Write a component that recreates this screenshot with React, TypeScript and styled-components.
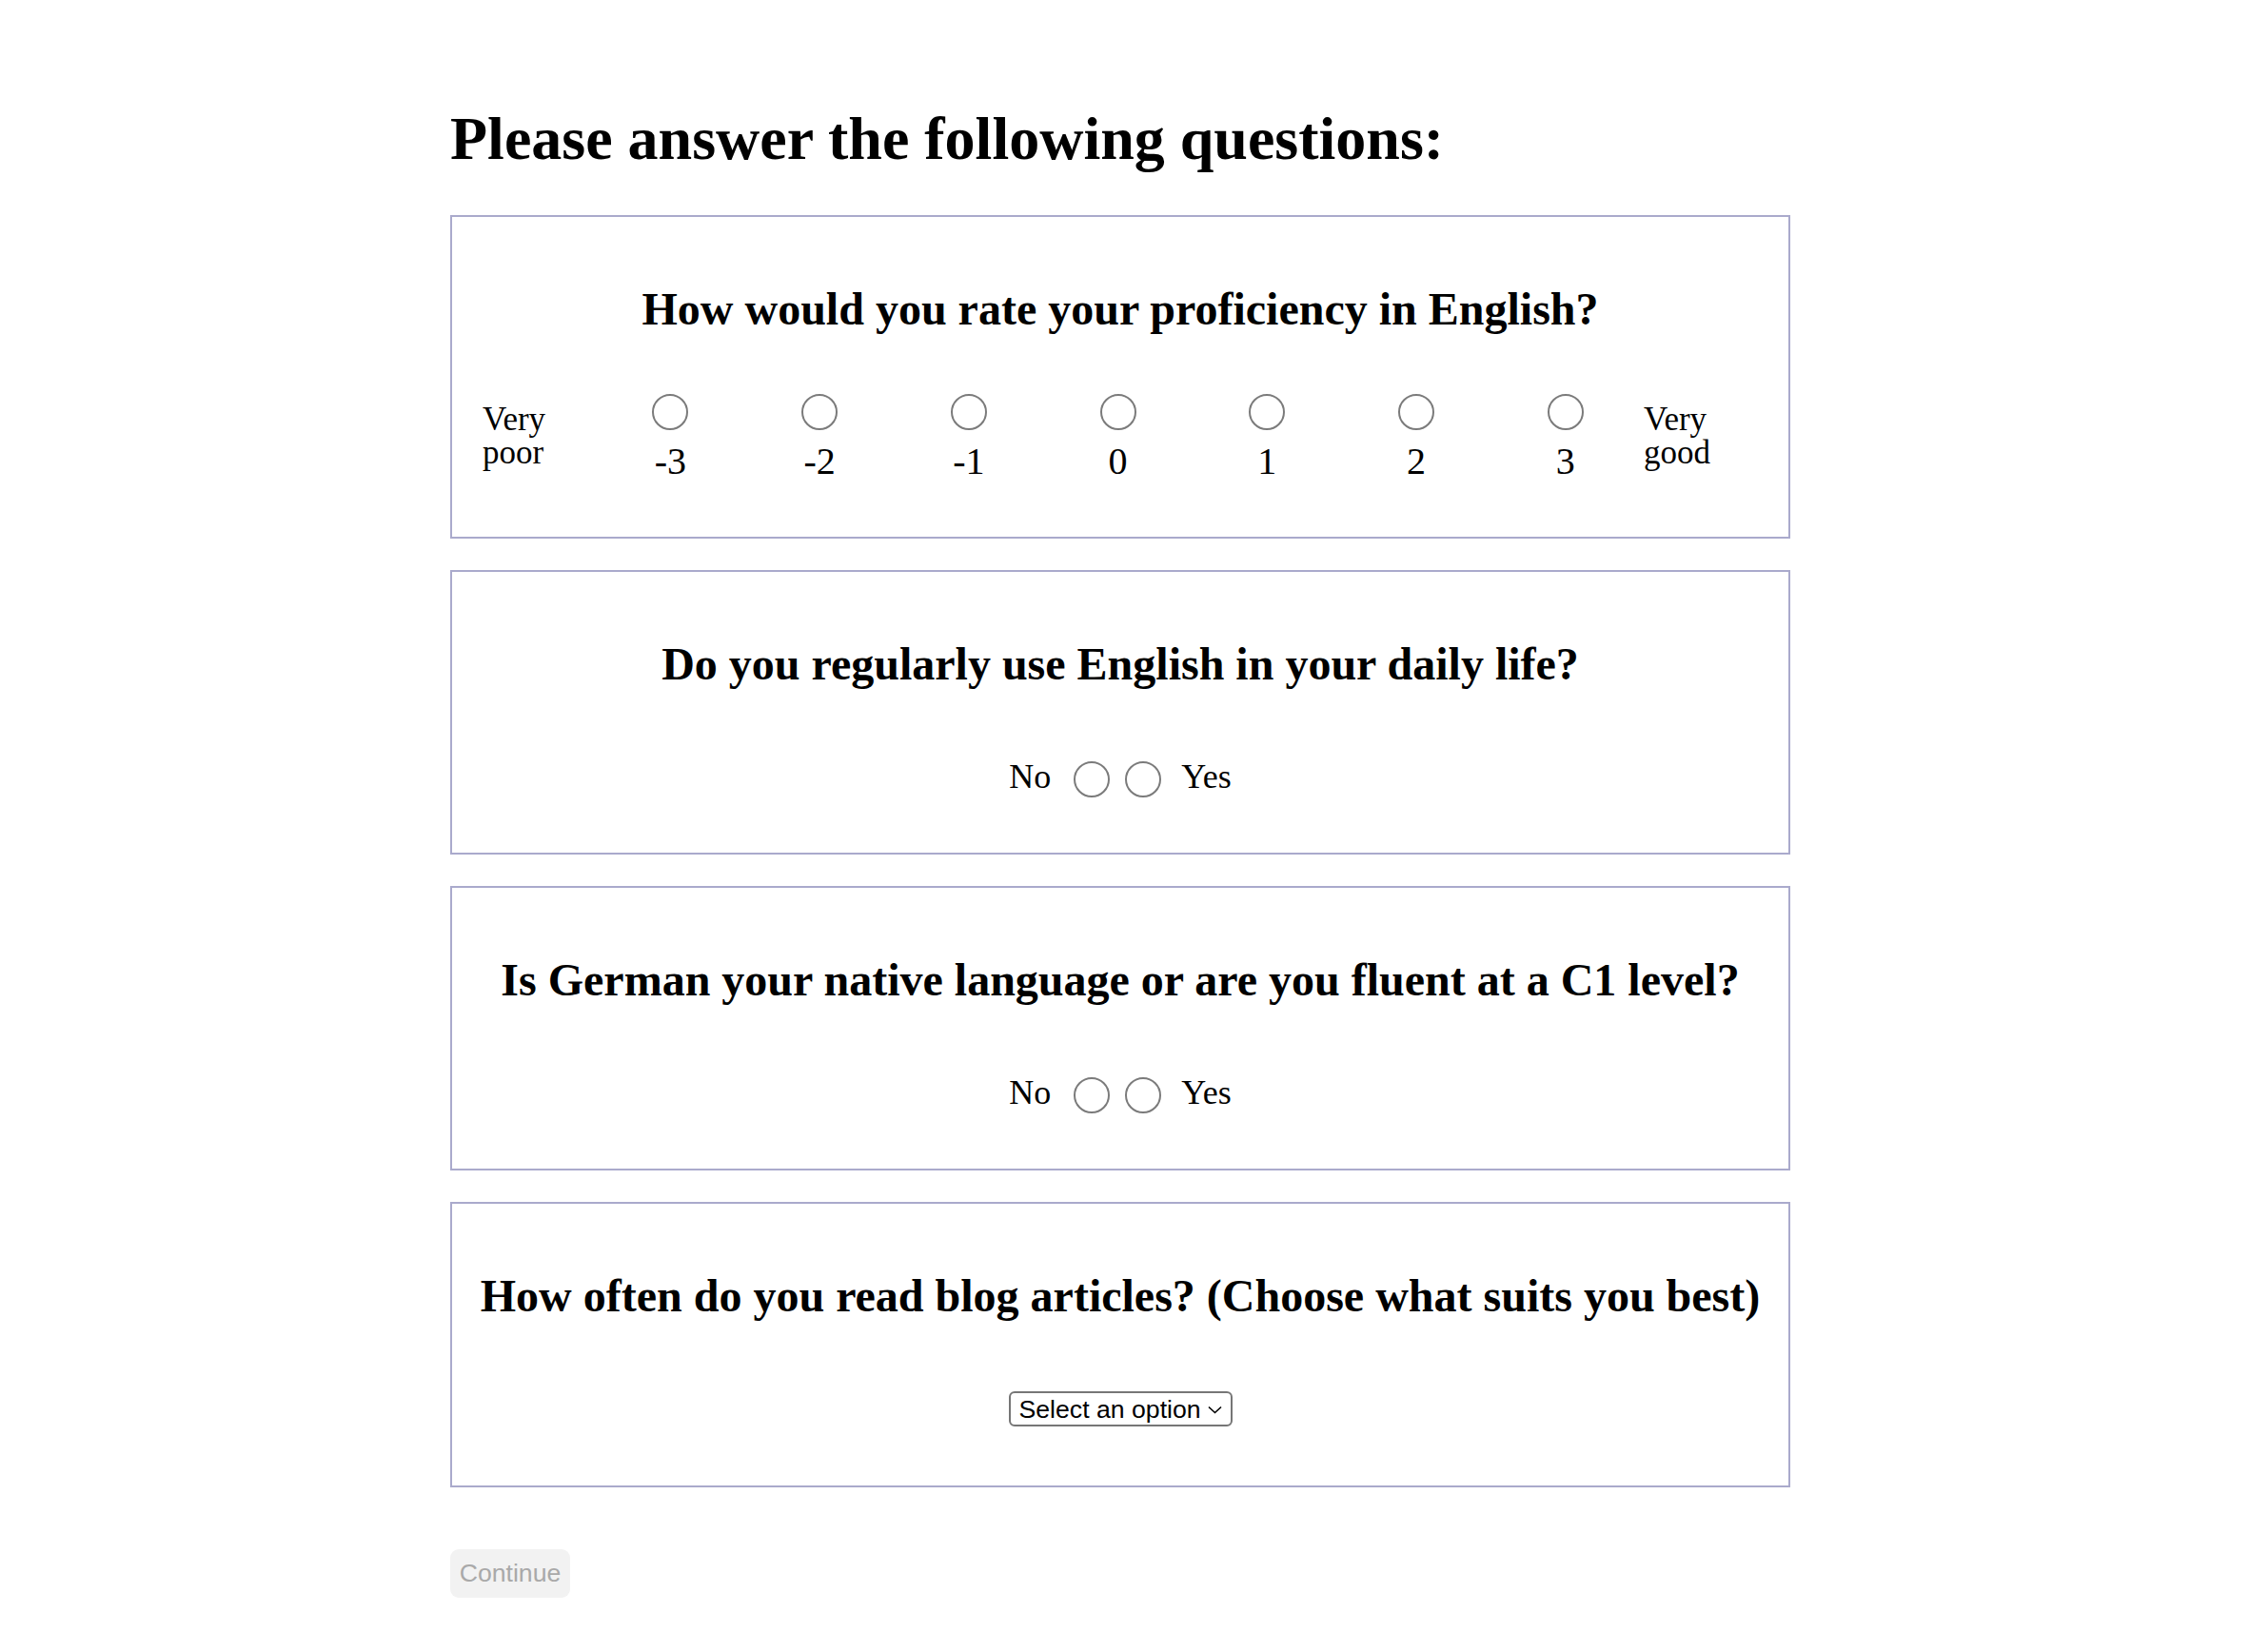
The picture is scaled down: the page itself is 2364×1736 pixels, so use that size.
import React from "react";
import styled, { createGlobalStyle } from "styled-components";

const Global = createGlobalStyle`
  html, body {
    margin: 0;
    padding: 0;
    background: #ffffff;
  }
  body {
    font-family: "Liberation Serif", "Times New Roman", serif;
    color: #000000;
  }
`;

const Page = styled.main`
  display: flex;
  flex-direction: column;
  align-items: stretch;
  width: 1408px;
  padding: 0 0 58px 473px;
`;

const Title = styled.h1`
  font-size: 64px;
  line-height: 74px;
  font-weight: bold;
  margin: 109px 0 43px;
`;

const Card = styled.section`
  border: 2px solid #aaaacc;
  padding: 32px;
  display: flex;
  flex-direction: column;
  align-items: center;
  & + & {
    margin-top: 33px;
  }
`;

const Question = styled.h2`
  font-size: 48px;
  line-height: 55px;
  font-weight: bold;
  text-align: center;
  white-space: nowrap;
  margin: 37px 0 43px;
`;

const ScaleRow = styled.div`
  align-self: stretch;
  display: flex;
  align-items: center;
  padding: 19px 0 24px;
`;

const EndLabel = styled.div<{ $width: number; $inset?: number }>`
  box-sizing: border-box;
  width: ${(p) => p.$width}px;
  padding-left: ${(p) => p.$inset ?? 0}px;
  flex: none;
  font-size: 35px;
  line-height: 35px;
  margin-bottom: 6px;
`;

const ScaleOption = styled.label`
  flex: 1;
  display: flex;
  flex-direction: column;
  align-items: center;
`;

const Radio = styled.input.attrs({ type: "radio" })<{ $spaced?: boolean }>`
  appearance: none;
  -webkit-appearance: none;
  box-sizing: border-box;
  width: 38px;
  height: 38px;
  border: 2.5px solid #7b7b7b;
  border-radius: 50%;
  background: #ffffff;
  margin: ${(p) => (p.$spaced ? "6px 6px 0 10px" : "0")};
  cursor: pointer;
`;

const ScaleValue = styled.span`
  font-size: 40px;
  line-height: 46px;
  margin-top: 10px;
`;

const BinaryRow = styled.div`
  display: flex;
  align-items: center;
  margin: 26px 0;
  height: 44px;
`;

const BinaryText = styled.span<{ $side: "left" | "right" }>`
  font-size: 36px;
  line-height: 40px;
  margin-right: ${(p) => (p.$side === "left" ? "14px" : "0")};
  margin-left: ${(p) => (p.$side === "right" ? "15px" : "0")};
`;

const SelectWrap = styled.span`
  position: relative;
  display: inline-flex;
  margin: 30px 0;
`;

const Select = styled.select`
  appearance: none;
  -webkit-appearance: none;
  box-sizing: border-box;
  width: 235px;
  height: 37px;
  border: 2px solid #767676;
  border-radius: 6px;
  background: #ffffff;
  color: #000000;
  font-family: "Liberation Sans", Arial, sans-serif;
  font-size: 26.67px;
  padding: 0 30px 0 9px;
  outline: none;
`;

const Chevron = styled.svg`
  position: absolute;
  right: 11px;
  top: 15px;
  width: 15px;
  height: 9px;
  pointer-events: none;
`;

const ContinueButton = styled.button`
  align-self: flex-start;
  margin-top: 65px;
  width: 126px;
  height: 51px;
  border: none;
  border-radius: 9px;
  background: #f2f2f2;
  color: #a9a9a9;
  font-family: "Liberation Sans", Arial, sans-serif;
  font-size: 26.67px;
  padding: 0;
`;

const scale = [-3, -2, -1, 0, 1, 2, 3];

function YesNo({ name }: { name: string }) {
  return (
    <BinaryRow>
      <BinaryText $side="left">No</BinaryText>
      <Radio name={name} value="no" $spaced aria-label="No" />
      <Radio name={name} value="yes" $spaced aria-label="Yes" />
      <BinaryText $side="right">Yes</BinaryText>
    </BinaryRow>
  );
}

export default function App() {
  return (
    <>
      <Global />
      <Page>
        <Title>Please answer the following questions:</Title>

        <Card>
          <Question>How would you rate your proficiency in English?</Question>
          <ScaleRow>
            <EndLabel $width={119}>
              Very
              <br />
              poor
            </EndLabel>
            {scale.map((v) => (
              <ScaleOption key={v}>
                <Radio name="proficiency" value={String(v)} />
                <ScaleValue>{v}</ScaleValue>
              </ScaleOption>
            ))}
            <EndLabel $width={124} $inset={4}>
              Very
              <br />
              good
            </EndLabel>
          </ScaleRow>
        </Card>

        <Card>
          <Question>Do you regularly use English in your daily life?</Question>
          <YesNo name="daily" />
        </Card>

        <Card>
          <Question>Is German your native language or are you fluent at a C1 level?</Question>
          <YesNo name="german" />
        </Card>

        <Card>
          <Question>How often do you read blog articles? (Choose what suits you best)</Question>
          <SelectWrap>
            <Select defaultValue="">
              <option value="" disabled>
                Select an option
              </option>
              <option value="daily">Daily</option>
              <option value="weekly">Weekly</option>
              <option value="monthly">Monthly</option>
              <option value="rarely">Rarely</option>
              <option value="never">Never</option>
            </Select>
            <Chevron viewBox="0 0 15 9" aria-hidden="true">
              <path d="M1 1.5 L7.5 7.5 L14 1.5" fill="none" stroke="#000" strokeWidth="1.6" />
            </Chevron>
          </SelectWrap>
        </Card>

        <ContinueButton disabled>Continue</ContinueButton>
      </Page>
    </>
  );
}
